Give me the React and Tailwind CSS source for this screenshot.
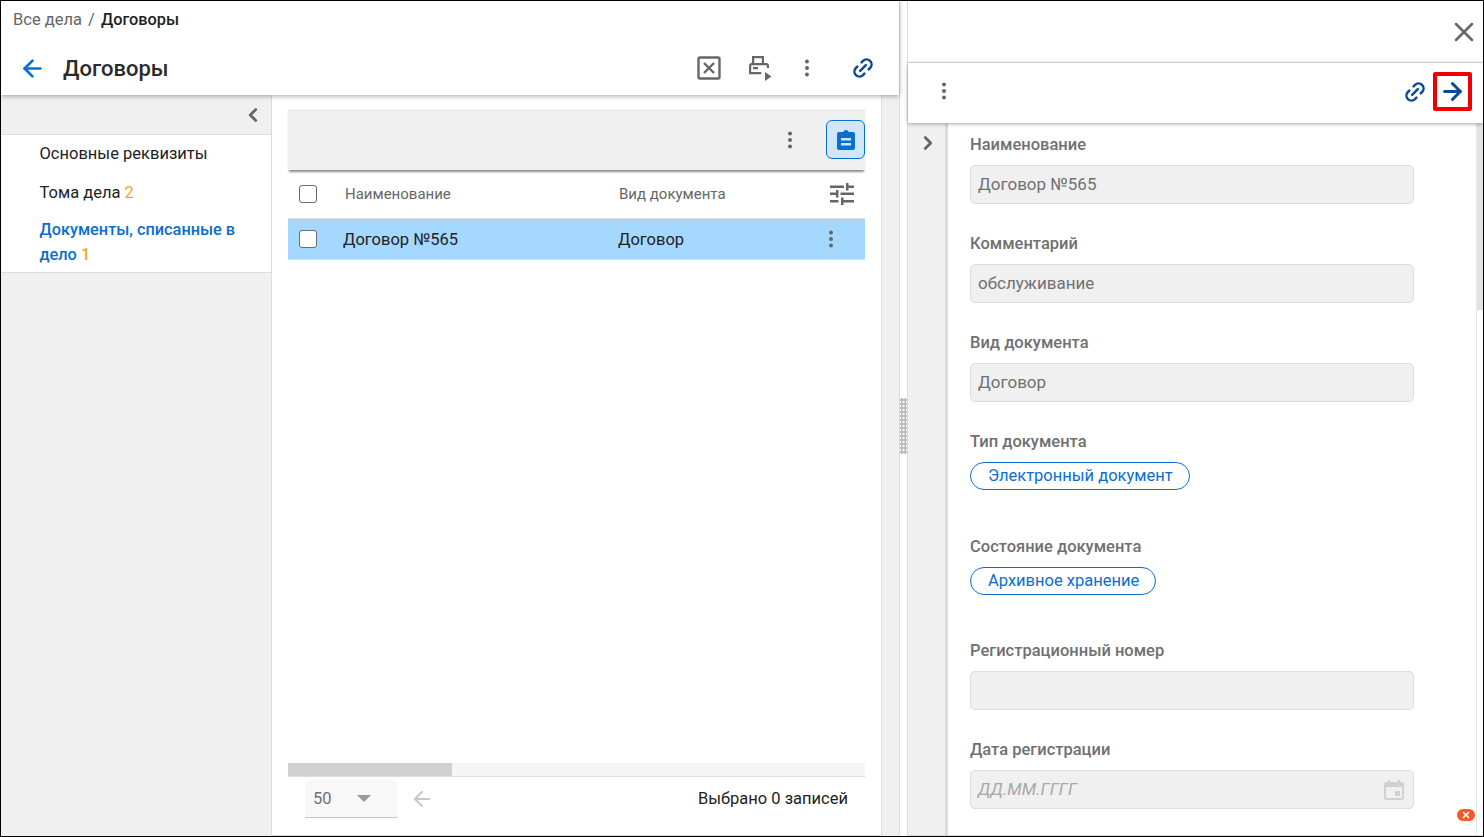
import { ArrowLeft, ArrowRight, ChevronLeft, ChevronRight, Link2, X } from 'lucide-react';

const Dots = ({ className = '' }) => (
  <svg width="24" height="24" viewBox="0 0 24 24" fill="#666" className={className}>
    <circle cx="12" cy="5.5" r="2" />
    <circle cx="12" cy="12" r="2" />
    <circle cx="12" cy="18.5" r="2" />
  </svg>
);

const Checkbox = () => (
  <span className="block w-[18px] h-[18px] rounded-[3px] border-[1.5px] border-[#6b6b6b] bg-white" />
);

const Field = ({ label, value, className = '' }) => (
  <div className={className}>
    <div className="text-[16.500px] leading-[20px] font-medium text-[#707070]">{label}</div>
    <div className="mt-[10px] h-[39px] w-[444px] rounded-[5px] border border-[#dcdcdc] bg-[#f0f0f0] pl-[7px] pt-[1px] flex items-center text-[17px] text-[#707070]">
      {value}
    </div>
  </div>
);

const Chip = ({ children }) => (
  <span className="inline-flex h-[28px] items-center rounded-full border border-[#0a6ed1] pl-[17px] pr-[16px] pt-[1px] text-[16.500px] text-[#0a6ed1]">
    {children}
  </span>
);

export default function App() {
  return (
    <div
      className="w-[1484px] h-[837px] border border-black flex overflow-hidden bg-white text-[#222]"
      style={{ fontFamily: 'Roboto, sans-serif' }}
    >
      {/* left panel */}
      <div className="w-[898px] flex flex-col shrink-0">
        <div className="h-[94px] shrink-0 relative z-10 bg-white shadow-[0_1px_5px_rgba(0,0,0,0.35)]">
          <div className="pl-3 pt-[10px] text-[16.500px] leading-[18px] text-[#666]">
            Все дела <span className="mx-[2px]">/</span> <span className="font-medium text-[16.300px] text-[#222]">Договоры</span>
          </div>
          <div className="flex items-center h-[40px] mt-[19px] pl-[18px]">
            <ArrowLeft size={27} strokeWidth={2.4} className="text-[#0a6ed1]" />
            <div className="ml-[17px] text-[22px] font-medium text-[#2b2b2b]">Договоры</div>
            <div className="ml-auto flex items-center">
              <svg width="24" height="24" viewBox="0 0 24 24" fill="none" stroke="#666" strokeWidth="2.4">
                <rect x="1.500" y="1.500" width="21" height="21" rx="1.500" />
                <path d="M7 7l10 10M17 7L7 17" />
              </svg>
              <svg width="26" height="26" viewBox="0 0 26 26" fill="#666" className="ml-[25px]">
                <path fillRule="evenodd" d="M6 1h12v7h2.500A2.500 2.500 0 0 1 23 10.500V13h-2.200v-2.500a.5.5 0 0 0-.3-.3h-15a.5.5 0 0 0-.3.3V17h10v2.200H3v-8.700A2.500 2.500 0 0 1 5.500 8H6zm2.200 2.200V8h7.600V3.200zM7 12h5v2.200H7z" />
                <path d="M19 17l6.500 4.500L19 26z" />
              </svg>
              <Dots className="ml-[23px]" />
              <Link2 size={24} strokeWidth={2.5} className="ml-[32px] mr-[24px] text-[#0b4a94] -rotate-45" />
            </div>
          </div>
        </div>
        <div className="flex-1 flex min-h-0">
          {/* sidebar */}
          <div className="w-[271px] shrink-0 bg-[#f0f0f0] border-r border-[#dcdcdc]">
            <div className="h-[40px] border-b border-[#dcdcdc] flex justify-end items-center pr-[7px] pt-[1px]">
              <ChevronLeft size={22} strokeWidth={3} className="text-[#666]" />
            </div>
            <div className="bg-white border-b border-[#dcdcdc] pl-[38.500px] pr-[30px] pt-[6px] pb-[5px] text-[16.500px] leading-[25px]">
              <div className="h-[25px]">Основные реквизиты</div>
              <div className="h-[25px] mt-[14px]">
                Тома дела <span className="text-[#f5a623]">2</span>
              </div>
              <div className="mt-[12px] font-medium text-[16.300px] text-[#0a6ed1]">
                <div>Документы, списанные в</div>
                <div>
                  дело <span className="text-[#f5a623]">1</span>
                </div>
              </div>
            </div>
          </div>
          {/* table area */}
          <div className="w-[610px] shrink-0 bg-white border-r border-b border-[#dcdcdc] pt-[14px] pb-[1px] px-[16px] flex flex-col">
            <div className="h-[61px] shrink-0 bg-[#f0f0f0] shadow-[0_3px_2px_-1px_rgba(0,0,0,0.45)] flex items-center justify-end">
              <Dots className="mr-[24px]" />
              <div className="w-[39px] h-[39px] rounded-[6px] border border-[#0a6ed1] bg-[#cfe6fb] flex items-center justify-center">
                <svg width="24" height="24" viewBox="0 0 24 24" fill="#0a6ed1">
                  <path fillRule="evenodd" d="M5 4h4.200a3 3 0 0 1 5.600 0H19a2 2 0 0 1 2 2v14a2 2 0 0 1-2 2H5a2 2 0 0 1-2-2V6a2 2 0 0 1 2-2zm2 6v2.500h10V10zm0 5v2.500h10V15z" />
                </svg>
              </div>
            </div>
            <div className="h-[48px] shrink-0 flex items-center pl-[11px] text-[15px] text-[#666]">
              <Checkbox />
              <span className="ml-[28px] w-[274px]">Наименование</span>
              <span>Вид документа</span>
              <svg width="24" height="22" viewBox="0 0 24 22" fill="#666" className="ml-auto mr-[11px]">
                <path d="M0 2.500h14v2.500H0zM16 0h2.500v7.500H16zM18.500 2.500H24v2.500h-5.500zM0 9.500h6v2.500H0zM6 7h2.500v7.500H6zM10.500 9.500H24v2.500H10.500zM0 17h8.500v2.500H0zM11 14.500h2.500V22H11zM13.500 17H24v2.500H13.500z" />
              </svg>
            </div>
            <div className="h-[42px] shrink-0 bg-[#a5d8ff] border-y border-[#dcdcdc] flex items-center pl-[11px] text-[16.500px] text-[#222]">
              <Checkbox />
              <span className="ml-[26px] w-[275px] pt-[2px]">Договор №565</span>
              <span className="pt-[2px]">Договор</span>
              <Dots className="ml-auto mr-[22px]" />
            </div>
            <div className="flex-1" />
            <div className="h-[14px] shrink-0 bg-[#f5f5f5] border-b border-[#dcdcdc]">
              <div className="w-[164px] h-[13px] bg-[#d0d0d0]" />
            </div>
            <div className="h-[57px] shrink-0 flex items-start pt-[3px] pl-[17px] pr-[17px]">
              <div className="w-[93px] h-[38px] bg-[#f8f8f8] border-b border-[#c8c8c8] rounded-t-[5px] flex items-center pl-2 text-[16.500px] text-[#707070]">
                <span className="pt-[1px]">50</span>
                <span className="ml-[25px] w-0 h-0 border-x-[7px] border-x-transparent border-t-[7px] border-t-[#999]" />
              </div>
              <ArrowLeft size={24} strokeWidth={2.2} className="ml-[12px] mt-[7px] text-[#c8c8c8]" />
              <span className="ml-auto mt-[7px] text-[16.500px] text-[#222]">Выбрано 0 записей</span>
            </div>
          </div>
          <div className="flex-1 bg-[#f0f0f0]" />
        </div>
      </div>

      {/* splitter */}
      <div className="w-[9px] shrink-0 bg-white border-x border-[#dcdcdc] flex items-center">
        <div className="w-[7px] h-[56px] relative top-[7px] bg-[radial-gradient(#bdbdbd_1.4px,transparent_1.5px)] bg-[length:3.500px_4px]" />
      </div>

      {/* right panel */}
      <div className="flex-1 min-w-0 flex flex-col relative">
        <div className="h-[62px] shrink-0 border-b border-[#dcdcdc] flex justify-end items-center pr-[3px]">
          <X size={32} strokeWidth={1.9} className="text-[#666]" />
        </div>
        <div className="h-[60px] shrink-0 relative z-10 bg-white shadow-[0_1px_4px_rgba(0,0,0,0.35)] flex items-center pl-[24px] pb-[4px]">
          <Dots />
          <Link2 size={24} strokeWidth={2.5} className="ml-auto mt-[2px] text-[#0b4a94] -rotate-45" />
          <div className="ml-[6px] mr-[11px] w-[39px] h-[39px] rounded-[2px] border-[4px] border-[#f00000] flex items-center justify-center shrink-0">
            <ArrowRight size={27} strokeWidth={2.6} className="text-[#0b4a94]" />
          </div>
        </div>
        <div className="flex-1 min-h-0 flex overflow-hidden border-b border-[#dcdcdc]">
          <div className="w-[40px] shrink-0 bg-[#f0f0f0] border-r-[3px] border-[#dcdcdc] flex justify-center pt-[9px] pl-[3px]">
            <ChevronRight size={22} strokeWidth={3} className="text-[#666]" />
          </div>
          <div className="flex-1 pl-[22px] pt-[12px]">
            <Field label="Наименование" value="Договор №565" />
            <Field label="Комментарий" value="обслуживание" className="mt-[30px]" />
            <Field label="Вид документа" value="Договор" className="mt-[30px]" />
            <div className="mt-[30px] text-[16.500px] leading-[20px] font-medium text-[#707070]">Тип документа</div>
            <div className="mt-[10px] h-[28px]"><Chip>Электронный документ</Chip></div>
            <div className="mt-[47px] text-[16.500px] leading-[20px] font-medium text-[#707070]">Состояние документа</div>
            <div className="mt-[10px] h-[28px]"><Chip>Архивное хранение</Chip></div>
            <Field label="Регистрационный номер" value="" className="mt-[46px]" />
            <div className="mt-[30px] text-[16.500px] leading-[20px] font-medium text-[#707070]">Дата регистрации</div>
            <div className="mt-[10px] h-[39px] w-[444px] rounded-[5px] border border-[#dcdcdc] bg-[#f0f0f0] pl-[7px] pr-2 flex items-center justify-between text-[17px] italic text-[#a8a8a8]">
              <span className="pt-[1px]">ДД.ММ.ГГГГ</span>
              <svg width="22" height="22" viewBox="0 0 22 22" fill="#d0d0d0">
                <path fillRule="evenodd" d="M5 1h2v2h8V1h2v2h2a2 2 0 0 1 2 2v14a2 2 0 0 1-2 2H3a2 2 0 0 1-2-2V5a2 2 0 0 1 2-2h2zM3 8v11h16V8zM12 12h5v5h-5z" />
              </svg>
            </div>
          </div>
          <div className="w-[7px] shrink-0 border-l border-[#e8e8e8]">
            <div className="h-[187px] bg-[#e4e4e4]" />
          </div>
        </div>
        <div className="absolute right-[8px] bottom-[15px] w-[18px] h-[12px] rounded-full bg-[#f4592b] flex items-center justify-center">
          <X size={10} strokeWidth={4} className="text-white" />
        </div>
      </div>
    </div>
  );
}
